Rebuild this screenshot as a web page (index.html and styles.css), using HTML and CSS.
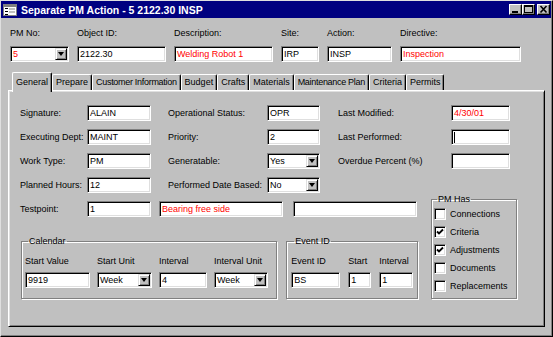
FILE: index.html
```html
<!DOCTYPE html>
<html lang="en">

<head>
    <meta charset="UTF-8">
    <title>Separate PM Action</title>
    <link rel="stylesheet" href="styles.css">
</head>

<body>
    <div class="window">
        <div class="titlebar">
            <svg class="app-icon" width="14" height="12" viewBox="0 0 14 12">
                <rect x="0.5" y="0.5" width="13" height="11" fill="#fff" stroke="#808080" />
                <rect x="1" y="1" width="12" height="2" fill="#808080" />
                <rect x="2" y="4" width="3" height="1" fill="#000" />
                <rect x="6" y="4" width="6" height="2" fill="#c0c0c0" />
                <rect x="2" y="7" width="3" height="1" fill="#000" />
                <rect x="6" y="7" width="6" height="2" fill="#c0c0c0" />
                <rect x="2" y="10" width="3" height="1" fill="#000" />
            </svg>
            <span class="title">Separate PM Action - 5 2122.30 INSP</span>
            <div class="caption-btns">
                <span class="cap-btn">
                    <svg width="11" height="9" viewBox="0 0 11 9"><rect x="2" y="6" width="6" height="2" fill="#000" /></svg>
                </span>
                <span class="cap-btn">
                    <svg width="11" height="9" viewBox="0 0 11 9" shape-rendering="crispEdges">
                        <rect x="1" y="0" width="9" height="2" fill="#000" />
                        <rect x="1.5" y="1.5" width="8" height="6" fill="none" stroke="#000" />
                    </svg>
                </span>
                <span class="cap-btn close">
                    <svg width="11" height="9" viewBox="0 0 11 9">
                        <path d="M2.5 1 L8.5 7.5 M8.5 1 L2.5 7.5" stroke="#000" stroke-width="1.6" />
                    </svg>
                </span>
            </div>
        </div>

        <!-- header fields -->
        <div class="header">
            <div class="field f-pmno">
                <label>PM No:</label>
                <div class="edit combo red"><span>5</span><b class="drop"></b></div>
            </div>
            <div class="field f-obj">
                <label>Object ID:</label>
                <div class="edit">2122.30</div>
            </div>
            <div class="field f-desc">
                <label>Description:</label>
                <div class="edit red">Welding Robot 1</div>
            </div>
            <div class="field f-site">
                <label>Site:</label>
                <div class="edit">IRP</div>
            </div>
            <div class="field f-action">
                <label>Action:</label>
                <div class="edit">INSP</div>
            </div>
            <div class="field f-dir">
                <label>Directive:</label>
                <div class="edit red">Inspection</div>
            </div>
        </div>

        <div class="tabs">
            <span class="tab active">General</span>
            <span class="tab">Prepare</span>
            <span class="tab long">Customer Information</span>
            <span class="tab">Budget</span>
            <span class="tab">Crafts</span>
            <span class="tab">Materials</span>
            <span class="tab long">Maintenance Plan</span>
            <span class="tab">Criteria</span>
            <span class="tab">Permits</span>
        </div>

        <div class="panel">
            <div class="grid">
                <span class="lbl">Signature:</span>
                <div class="edit">ALAIN</div>
                <span class="lbl mid">Operational Status:</span>
                <div class="edit">OPR</div>
                <span class="lbl right">Last Modified:</span>
                <div class="edit red">4/30/01</div>

                <span class="lbl">Executing Dept:</span>
                <div class="edit">MAINT</div>
                <span class="lbl mid">Priority:</span>
                <div class="edit">2</div>
                <span class="lbl right">Last Performed:</span>
                <div class="edit"><i class="caret"></i></div>

                <span class="lbl">Work Type:</span>
                <div class="edit">PM</div>
                <span class="lbl mid">Generatable:</span>
                <div class="edit combo"><span>Yes</span><b class="drop"></b></div>
                <span class="lbl right">Overdue Percent (%)</span>
                <div class="edit"></div>

                <span class="lbl">Planned Hours:</span>
                <div class="edit">12</div>
                <span class="lbl mid">Performed Date Based:</span>
                <div class="edit combo"><span>No</span><b class="drop"></b></div>
            </div>

            <div class="lower">
                <div class="lower-left">
                    <div class="testpoint">
                        <span class="lbl">Testpoint:</span>
                        <div class="edit tp-num">1</div>
                        <div class="edit tp-desc red">Bearing free side</div>
                        <div class="edit tp-extra"></div>
                    </div>
                    <div class="groups">
                        <fieldset class="group calendar">
                            <legend>Calendar</legend>
                            <div class="cal-grid">
                                <span>Start Value</span>
                                <span>Start Unit</span>
                                <span>Interval</span>
                                <span>Interval Unit</span>
                                <div class="edit">9919</div>
                                <div class="edit combo"><span>Week</span><b class="drop"></b></div>
                                <div class="edit">4</div>
                                <div class="edit combo"><span>Week</span><b class="drop"></b></div>
                            </div>
                        </fieldset>
                        <fieldset class="group event">
                            <legend>Event ID</legend>
                            <div class="ev-grid">
                                <span>Event ID</span>
                                <span>Start</span>
                                <span>Interval</span>
                                <div class="edit">BS</div>
                                <div class="edit">1</div>
                                <div class="edit">1</div>
                            </div>
                        </fieldset>
                    </div>
                </div>

                <fieldset class="group pmhas">
                    <legend>PM Has</legend>
                    <div class="check"><span class="chk"></span>Connections</div>
                    <div class="check"><span class="chk on"><svg width="8" height="8" viewBox="0 0 8 8"><path d="M1 3.5 L3 5.5 L7 1.5" fill="none" stroke="#000" stroke-width="1.8" /></svg></span>Criteria</div>
                    <div class="check"><span class="chk on"><svg width="8" height="8" viewBox="0 0 8 8"><path d="M1 3.5 L3 5.5 L7 1.5" fill="none" stroke="#000" stroke-width="1.8" /></svg></span>Adjustments</div>
                    <div class="check"><span class="chk"></span>Documents</div>
                    <div class="check"><span class="chk"></span>Replacements</div>
                </fieldset>
            </div>
        </div>
    </div>
</body>

</html>
```

FILE: styles.css
```css
* {
    margin: 0;
    padding: 0;
    box-sizing: border-box;
}

body {
    font-family: "Liberation Sans", Arial, sans-serif;
    font-size: 9px;
    color: #000;
    background: #c0c0c0;
}

.window {
    width: 553px;
    height: 337px;
    background: #c0c0c0;
    border: 1px solid;
    border-color: #dfdfdf #000 #000 #dfdfdf;
    box-shadow: inset -1px -1px #808080;
    padding: 0 1px 1px 0;
    display: flex;
    flex-direction: column;
}

/* title bar */
.titlebar {
    height: 17px;
    background: #000080;
    color: #fff;
    display: flex;
    align-items: center;
    padding: 0 1px 0 2px;
}

.app-icon {
    display: block;
    margin-right: 4px;
}

.title {
    font-weight: bold;
    font-size: 10.5px;
    white-space: nowrap;
}

.caption-btns {
    margin-left: auto;
    display: flex;
}

.cap-btn {
    width: 13px;
    height: 11px;
    background: #c0c0c0;
    border: 1px solid;
    border-color: #fff #000 #000 #fff;
    box-shadow: inset -1px -1px #808080;
}

.cap-btn svg {
    display: block;
}

.cap-btn.close {
    margin-left: 2px;
}

/* edit boxes */
.edit {
    height: 16px;
    background: #fff;
    border: 1px solid;
    border-color: #808080 #fff #fff #808080;
    box-shadow: inset 1px 1px #000, inset -1px -1px #dfdfdf;
    padding-left: 2px;
    display: flex;
    align-items: center;
    white-space: nowrap;
    overflow: hidden;
    line-height: 12px;
}

.red {
    color: #f00;
}

.drop {
    margin-left: auto;
    margin-right: 1px;
    width: 12px;
    height: 12px;
    flex: none;
    background: #c0c0c0;
    border: 1px solid;
    border-color: #dfdfdf #000 #000 #dfdfdf;
    box-shadow: inset 1px 1px #fff, inset -1px -1px #808080;
    display: flex;
    align-items: center;
    justify-content: center;
}

.drop::after {
    content: "";
    border-style: solid;
    border-width: 4px 3.5px 0;
    border-color: #000 transparent transparent;
}

.caret {
    width: 1px;
    height: 11px;
    background: #000;
}

/* header */
.header {
    display: flex;
    gap: 8px;
    margin: 10px 0 0 9px;
}

.field label {
    display: block;
    height: 11px;
    line-height: 11px;
    margin-bottom: 7px;
}

.f-pmno { width: 59px; }
.f-obj { width: 89px; }
.f-desc { width: 99px; }
.f-site { width: 38px; }
.f-action { width: 65px; }
.f-dir { width: 121px; }

/* tabs */
.tabs {
    display: flex;
    align-items: flex-end;
    height: 18px;
    margin: 10px 0 0 11px;
    position: relative;
    z-index: 1;
}

.tab {
    height: 16px;
    line-height: 15px;
    padding: 0 3px;
    border: 1px solid #fff;
    border-bottom: 0;
    border-right-color: #000;
    border-radius: 2px 2px 0 0;
    box-shadow: inset -1px 0 #808080;
    white-space: nowrap;
}

.tab.long {
    letter-spacing: -0.3px;
}

.tab.active {
    height: 20px;
    line-height: 18px;
    margin-bottom: -2px;
    background: #c0c0c0;
}

/* tab page */
.panel {
    flex: 1;
    margin: 0 6px 8px 7px;
    border: 1px solid;
    border-color: #fff #000 #000 #fff;
    box-shadow: inset 1px 1px #dfdfdf, inset -1px -1px #808080;
    padding: 14px 0 0 11px;
}

.grid {
    display: grid;
    grid-template-columns: 67px 64px 116px 53px 131px 59px;
    grid-auto-rows: 16px;
    row-gap: 8px;
}

.lbl {
    line-height: 16px;
    white-space: nowrap;
}

.lbl.mid {
    padding-left: 17px;
}

.lbl.right {
    padding-left: 18px;
}

.lower {
    display: flex;
    align-items: flex-start;
    margin-top: 1px;
}

.lower-left {
    width: 398px;
    padding-top: 7px;
}

.testpoint {
    display: flex;
}

.testpoint .lbl {
    width: 67px;
}

.tp-num { width: 64px; }
.tp-desc { width: 124px; margin-left: 8px; }
.tp-extra { width: 124px; margin-left: 10px; }

.groups {
    display: flex;
    margin-top: 19px;
}

/* group boxes */
.group {
    border: 1px solid #808080;
    box-shadow: inset 1px 1px #fff, 1px 1px #fff;
    min-width: 0;
}

.group legend {
    line-height: 11px;
    padding: 0 1px;
    margin-left: 3px;
}

.calendar {
    width: 257px;
    margin-left: 1px;
    padding: 9px 0 10px 3px;
}

.event {
    width: 132px;
    margin-left: 9px;
    padding: 9px 0 10px 4px;
}

.cal-grid,
.ev-grid {
    display: grid;
    grid-template-rows: 11px 16px;
    row-gap: 5px;
    column-gap: 7px;
    line-height: 11px;
    white-space: nowrap;
}

.cal-grid {
    grid-template-columns: 65px 55px 48px 54px;
}

.ev-grid {
    grid-template-columns: 49px 23px 34px;
    column-gap: 8px;
}

.pmhas {
    width: 86px;
    margin-left: 13px;
    padding: 0 0 3px 2px;
}

.check {
    height: 18px;
    display: flex;
    align-items: center;
    white-space: nowrap;
}

.chk {
    width: 12px;
    height: 12px;
    margin-right: 4px;
    background: #fff;
    border: 1px solid;
    border-color: #808080 #fff #fff #808080;
    box-shadow: inset 1px 1px #000, inset -1px -1px #dfdfdf;
    display: flex;
    align-items: center;
    justify-content: center;
}

.chk svg {
    display: block;
}
```
